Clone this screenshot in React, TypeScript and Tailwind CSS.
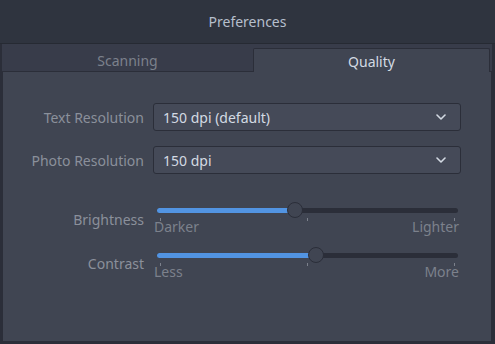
import React from "react";

// Arc-Dark palette
const font = { fontFamily: '"Noto Sans", "Open Sans", sans-serif' };

const Chevron = () => (
  <svg width="10" height="6" viewBox="0 0 10 6" fill="none">
    <path d="M1 1l4 4 4-4" stroke="#d3dae3" strokeWidth="1.6" strokeLinecap="round" strokeLinejoin="round" />
  </svg>
);

const Combo = ({ value }: { value: string }) => (
  <div className="w-[308px] h-[28px] flex items-center justify-between pl-[9px] pr-[14px] bg-[#454a58] border border-[#2b2e39] rounded-[3px] text-[14px] text-[#d3dae3]">
    <span>{value}</span>
    <Chevron />
  </div>
);

const Slider = ({ value, low, high }: { value: number; low: string; high: string }) => {
  // value in 0..1, knob travels between the end ticks
  const pos = 3 + value * 294;
  return (
    <div className="w-[308px] pl-[4px] pr-[3px]">
      <div className="relative h-[16px]">
        <div className="absolute left-0 right-0 top-[6px] h-[5px] rounded-full bg-[#2b2e39]" />
        <div className="absolute left-0 top-[6px] h-[5px] rounded-full bg-[#5294e2]" style={{ width: pos }} />
        <div
          className="absolute top-0 w-[16px] h-[16px] rounded-full bg-[#404552] border border-[#2b2e39]"
          style={{ left: pos - 8 }}
        />
        <div className="absolute left-[3px] top-[16px] w-px h-[3px] bg-[#7c818c]" />
        <div className="absolute left-[150px] top-[16px] w-px h-[3px] bg-[#7c818c]" />
        <div className="absolute left-[297px] top-[16px] w-px h-[3px] bg-[#7c818c]" />
      </div>
      <div className="flex justify-between -ml-[3px] -mr-[1px] text-[14px] leading-[18px] text-[#7c818c]">
        <span>{low}</span>
        <span>{high}</span>
      </div>
    </div>
  );
};

export default function App() {
  return (
    <div className="w-[495px] h-[344px] flex flex-col bg-[#2b2e39] overflow-hidden" style={font}>
      {/* Title bar */}
      <div className="h-[44px] shrink-0 flex items-center justify-center bg-[#2f343f] border-b border-[#262a33] text-[14px] text-[#b6bfcc]">
        Preferences
      </div>

      {/* Notebook */}
      <div className="flex-1 flex flex-col pl-[2px] pr-[3px] pb-[3px]">
        <div className="h-[28px] shrink-0 flex bg-[#383c4a] text-[14px]">
          <div className="w-[251px] flex items-center justify-center pt-[5px] text-[#7c818c] border-b border-[#2b2e39]">
            Scanning
          </div>
          <div className="w-[237px] mt-[4px] flex items-center justify-center pt-[1px] bg-[#404552] border border-b-0 border-[#2b2e39] rounded-t-[2px] text-[#d3dae3]">
            Quality
          </div>
          <div className="flex-1 border-b border-[#2b2e39]" />
        </div>

        <div className="flex-1 bg-[#404552] border-l border-r border-[#2b2e39] pt-[31px]">
          <div className="flex items-center">
            <div className="w-[141px] text-right text-[14px] text-[#8b909b]">Text Resolution</div>
            <div className="ml-[9px]">
              <Combo value="150 dpi (default)" />
            </div>
          </div>
          <div className="flex items-center mt-[15px]">
            <div className="w-[141px] text-right text-[14px] text-[#8b909b]">Photo Resolution</div>
            <div className="ml-[9px]">
              <Combo value="150 dpi" />
            </div>
          </div>

          <div className="flex items-start mt-[28px]">
            <div className="w-[141px] pt-[8px] text-right text-[14px] leading-[20px] text-[#8b909b]">Brightness</div>
            <div className="ml-[9px]">
              <Slider value={0.46} low="Darker" high="Lighter" />
            </div>
          </div>
          <div className="flex items-start mt-[11px]">
            <div className="w-[141px] pt-[7px] text-right text-[14px] leading-[20px] text-[#8b909b]">Contrast</div>
            <div className="ml-[9px]">
              <Slider value={0.532} low="Less" high="More" />
            </div>
          </div>
        </div>
      </div>
    </div>
  );
}
